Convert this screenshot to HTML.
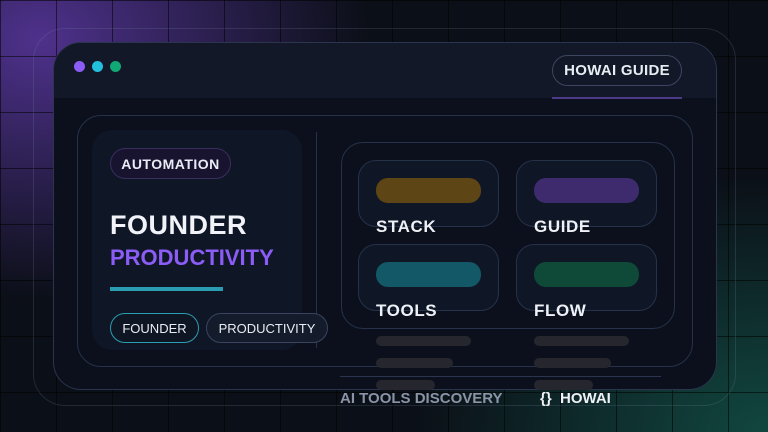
<!DOCTYPE html>
<html><head><style>
*{margin:0;padding:0;box-sizing:border-box}
body{width:768px;height:432px;overflow:hidden;position:relative;font-family:"Liberation Sans",sans-serif;font-weight:bold;
background:
radial-gradient(ellipse 330px 260px at 40px 40px,rgba(90,55,160,.85),rgba(90,55,160,0) 100%),
radial-gradient(ellipse 360px 260px at 768px 432px,rgba(20,95,80,.7),rgba(20,95,80,0) 100%),
#0b0f17;}
.grid{position:absolute;inset:0;background-image:linear-gradient(to right,rgba(0,0,0,.55) 1px,transparent 1px),linear-gradient(to bottom,rgba(0,0,0,.55) 1px,transparent 1px);background-size:56px 56px;background-position:0 0}
.abs{position:absolute}
.frame{left:33px;top:28px;width:703px;height:378px;border:1px solid rgba(120,130,160,.22);border-radius:32px}
.win{left:53px;top:42px;width:664px;height:348px;border-radius:28px;background:#0b101c;border:1.5px solid #2b3550;overflow:hidden}
.head{left:0;top:0;width:100%;height:55px;background:#121827}
.dot{width:11px;height:11px;border-radius:50%;top:18px}
.pill{border-radius:16px;display:flex;align-items:center;justify-content:center;color:#e8ecf3}
.bar{border-radius:12px}
.g{background:#26272e;height:10px;border-radius:5px}
.lbl{color:#eef1f6;font-size:17px;letter-spacing:.6px}
</style></head><body>
<div class="grid"></div>
<div class="abs frame"></div>
<div class="abs win">
 <div class="abs head"></div>
 <div class="abs dot" style="left:20px;background:#8b5cf6"></div>
 <div class="abs dot" style="left:38px;background:#22c0dc"></div>
 <div class="abs dot" style="left:56px;background:#10a874"></div>
 <div class="abs pill" style="left:498px;top:12px;width:130px;height:31px;border:1px solid #3c4660;font-size:15px;letter-spacing:.3px">HOWAI GUIDE</div>
 <div class="abs" style="left:498px;top:54px;width:130px;height:2px;background:#4a3a88"></div>
</div>
<div class="abs" style="left:77px;top:115px;width:616px;height:252px;border:1px solid #26324a;border-radius:24px"></div>
<div class="abs" style="left:92px;top:130px;width:210px;height:220px;background:#0f1727;border-radius:20px"></div>
<div class="abs" style="left:316px;top:132px;width:1px;height:216px;background:#26324a"></div>
<div class="abs pill" style="left:110px;top:148px;width:121px;height:31px;background:#181430;border:1px solid #3a2e5c;font-size:14px;letter-spacing:.5px">AUTOMATION</div>
<div class="abs" style="left:110px;top:210px;font-size:27px;color:#f1f3f8;letter-spacing:.5px">FOUNDER</div>
<div class="abs" style="left:110px;top:245px;font-size:22px;color:#8b5cf6">PRODUCTIVITY</div>
<div class="abs" style="left:110px;top:287px;width:113px;height:4px;background:#2a9db0"></div>
<div class="abs pill" style="left:110px;top:313px;width:89px;height:30px;border:1px solid #2a9db0;font-size:13px;font-weight:normal;background:#0e1624">FOUNDER</div>
<div class="abs pill" style="left:206px;top:313px;width:122px;height:30px;border:1px solid #3a4460;font-size:13px;font-weight:normal;background:#141b2a">PRODUCTIVITY</div>

<div class="abs" style="left:341px;top:142px;width:334px;height:187px;border:1px solid #26324a;border-radius:22px"></div>
<div class="abs" style="left:358px;top:160px;width:141px;height:67px;border:1px solid #26324a;border-radius:18px;background:#0f1626"></div>
<div class="abs" style="left:516px;top:160px;width:141px;height:67px;border:1px solid #26324a;border-radius:18px;background:#0f1626"></div>
<div class="abs" style="left:358px;top:244px;width:141px;height:67px;border:1px solid #26324a;border-radius:18px;background:#0f1626"></div>
<div class="abs" style="left:516px;top:244px;width:141px;height:67px;border:1px solid #26324a;border-radius:18px;background:#0f1626"></div>
<div class="abs bar" style="left:376px;top:178px;width:105px;height:25px;background:#5e4515"></div>
<div class="abs bar" style="left:534px;top:178px;width:105px;height:25px;background:#3e2b6e"></div>
<div class="abs bar" style="left:376px;top:262px;width:105px;height:25px;background:#135866"></div>
<div class="abs bar" style="left:534px;top:262px;width:105px;height:25px;background:#0f4a38"></div>
<div class="abs lbl" style="left:376px;top:217px">STACK</div>
<div class="abs lbl" style="left:534px;top:217px">GUIDE</div>
<div class="abs lbl" style="left:376px;top:301px">TOOLS</div>
<div class="abs lbl" style="left:534px;top:301px">FLOW</div>
<div class="abs g" style="left:376px;top:336px;width:95px"></div>
<div class="abs g" style="left:376px;top:358px;width:77px"></div>
<div class="abs g" style="left:376px;top:380px;width:59px"></div>
<div class="abs g" style="left:534px;top:336px;width:95px"></div>
<div class="abs g" style="left:534px;top:358px;width:77px"></div>
<div class="abs g" style="left:534px;top:380px;width:59px"></div>
<div class="abs" style="left:340px;top:376px;width:321px;height:1px;background:#2b3550"></div>
<div class="abs" style="left:340px;top:390px;font-size:15px;color:#8a94a6">AI TOOLS DISCOVERY</div>
<div class="abs" style="left:540px;top:390px;font-size:15px;color:#eef1f6">{}&nbsp; HOWAI</div>
</body></html>
